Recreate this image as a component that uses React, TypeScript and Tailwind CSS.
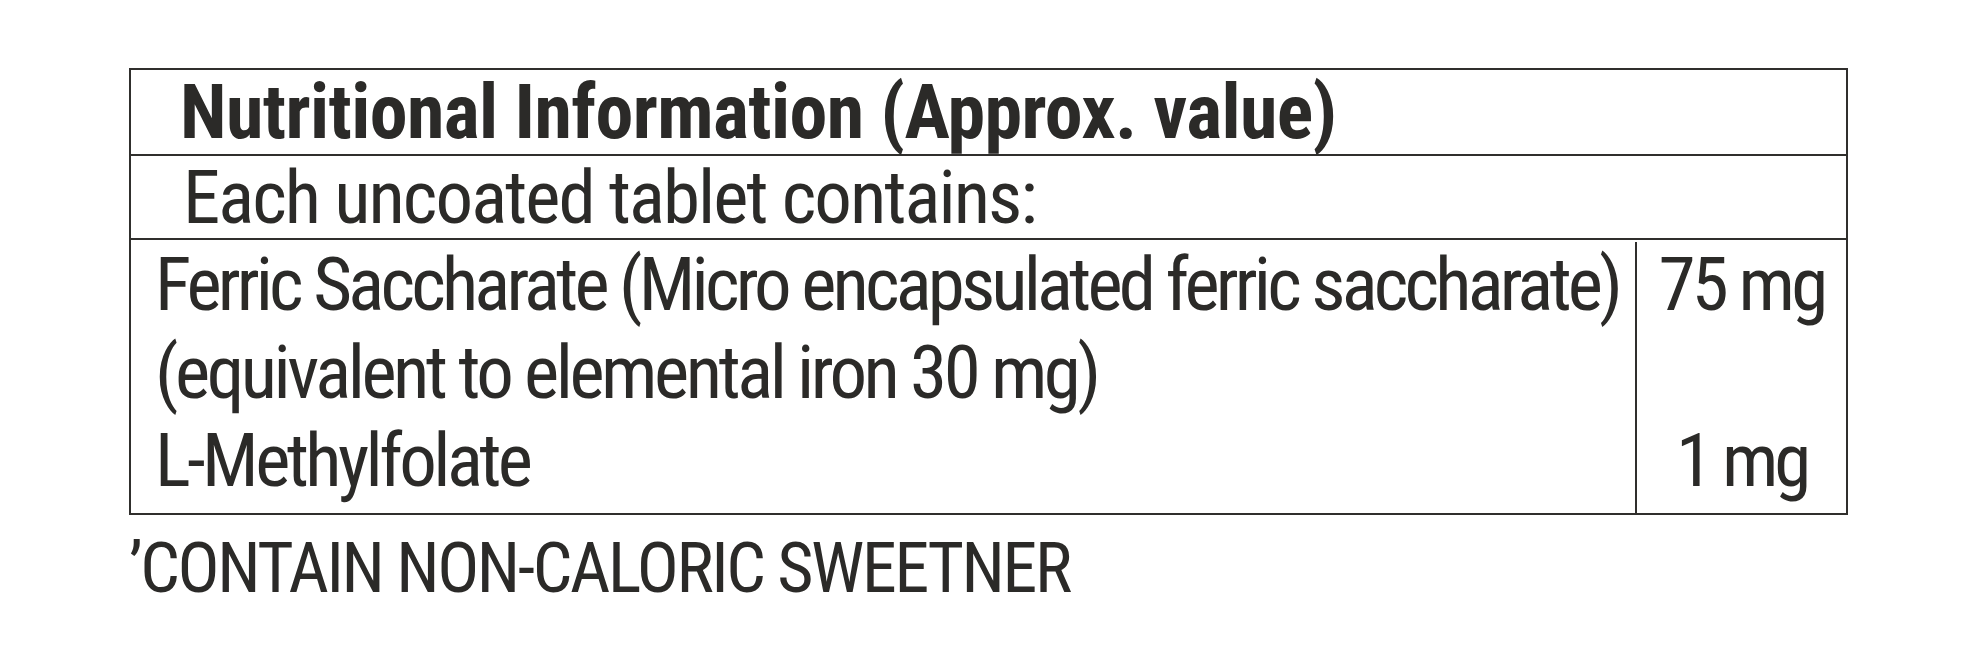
import React from 'react'

const line = 'border-[#302f2d]'

export default function App() {
  return (
    <div className="min-h-screen bg-white pt-[68px] text-[#2b2a28] font-['Roboto',sans-serif] [font-stretch:75%]">
      <div className={`ml-[129px] w-[1719px] border-2 ${line}`}>
        <div className={`border-b-2 ${line} pl-[49px] text-[76px] font-bold leading-[84px] tracking-[-0.6px]`}>
          Nutritional Information (Approx. value)
        </div>
        <div className={`border-b-2 ${line} pl-[52px] text-[75px] leading-[82px] tracking-[-2px]`}>
          Each uncoated tablet contains:
        </div>
        <div className="flex text-[75px] leading-[88px]">
          <div className="w-[1504px] whitespace-nowrap pb-[9px] pl-[24px]">
            <div className="tracking-[-3.85px]">Ferric Saccharate (Micro encapsulated ferric saccharate)</div>
            <div className="tracking-[-3.5px]">(equivalent to elemental iron 30 mg)</div>
            <div className="tracking-[-3.6px]">L-Methylfolate</div>
          </div>
          <div className={`mt-[2px] flex flex-1 flex-col items-center border-l-2 ${line}`}>
            <div className="-mt-[2px] tracking-[-3.7px]">75 mg</div>
            <div className="h-[88px]" />
            <div className="tracking-[-4.2px]">1 mg</div>
          </div>
        </div>
      </div>
      <p className="ml-[129px] mt-[13px] text-[70px] leading-[80px] tracking-[-2.4px]">’CONTAIN NON-CALORIC SWEETNER</p>
    </div>
  )
}
